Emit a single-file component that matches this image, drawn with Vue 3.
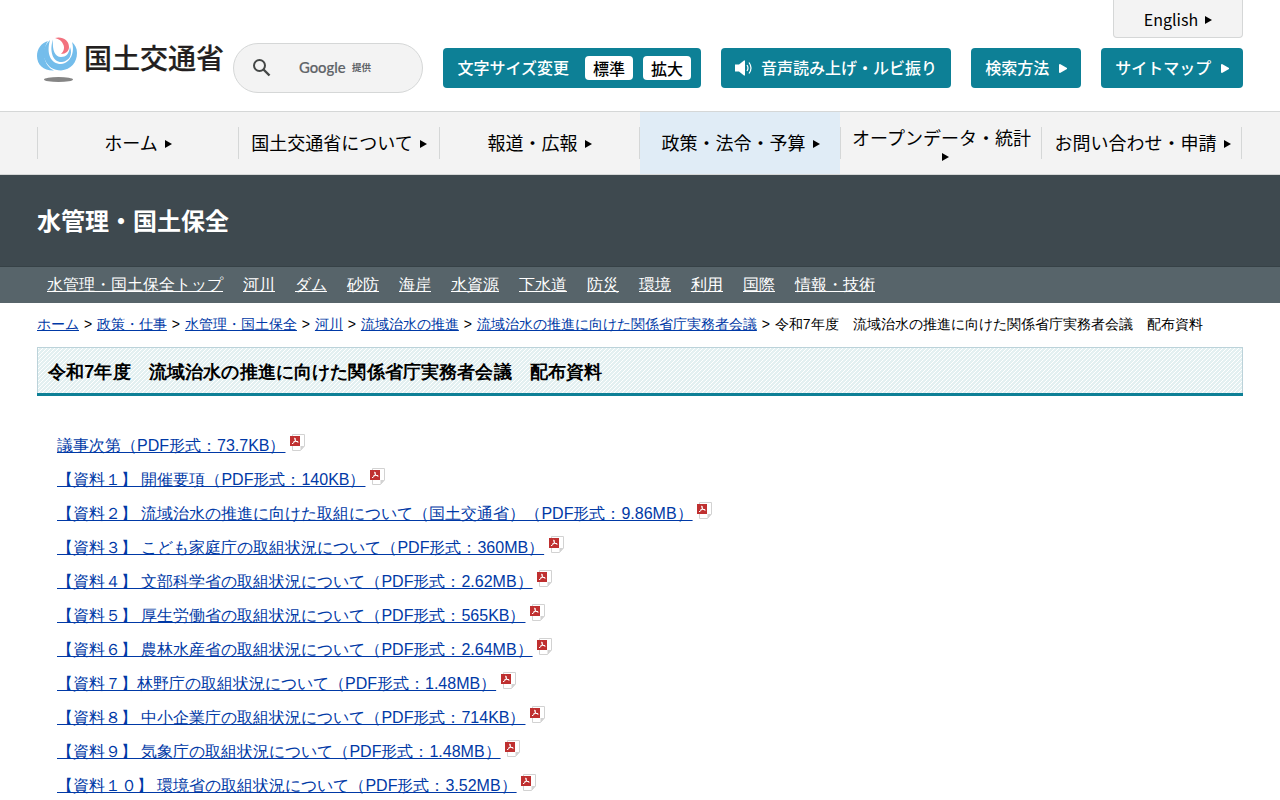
<script setup>
const nav = [
  { t: 'ホーム' },
  { t: '国土交通省について' },
  { t: '報道・広報' },
  { t: '政策・法令・予算', on: true },
  { t: 'オープンデータ・統計', wrap: true },
  { t: 'お問い合わせ・申請' },
]
const sub = ['水管理・国土保全トップ', '河川', 'ダム', '砂防', '海岸', '水資源', '下水道', '防災', '環境', '利用', '国際', '情報・技術']
const crumbs = ['ホーム', '政策・仕事', '水管理・国土保全', '河川', '流域治水の推進', '流域治水の推進に向けた関係省庁実務者会議']
const docs = [
  '議事次第（PDF形式：73.7KB）',
  '【資料１】 開催要項（PDF形式：140KB）',
  '【資料２】 流域治水の推進に向けた取組について（国土交通省）（PDF形式：9.86MB）',
  '【資料３】 こども家庭庁の取組状況について（PDF形式：360MB）',
  '【資料４】 文部科学省の取組状況について（PDF形式：2.62MB）',
  '【資料５】 厚生労働省の取組状況について（PDF形式：565KB）',
  '【資料６】 農林水産省の取組状況について（PDF形式：2.64MB）',
  '【資料７】林野庁の取組状況について（PDF形式：1.48MB）',
  '【資料８】 中小企業庁の取組状況について（PDF形式：714KB）',
  '【資料９】 気象庁の取組状況について（PDF形式：1.48MB）',
  '【資料１０】 環境省の取組状況について（PDF形式：3.52MB）',
]
</script>

<template>
  <div class="page">
    <header class="head">
      <a class="logo">
        <svg class="mark" width="42" height="46" viewBox="0 0 42 46">
          <path d="M11 4C4 6 0 12 0 19c0 9 7 15 17 14.500C7 29 4 15 11 4z" fill="#74bdeb" />
          <path d="M13 3C7 9 4.500 16 8 23c3 7 9 10.500 16 10.500 10-1 16-8 16-17.500 0-5-2-8-5-11 3 10-1 21-11 22-10 0-15-10-11-24z" fill="#74bdeb" />
          <path d="M16 2.500c-4 12 0 23 9 22.500 7-1 11-7 8-15-1 7-4 10-9 10-6 0-9-7-8-17.500z" fill="#74bdeb" />
          <path d="M18 1c7-2 14 2 14 9 0 4-3 7-8 7 3-3 4-7 2-10-1-3-4-5-8-6z" fill="#f2727f" />
          <ellipse cx="21.500" cy="42.500" rx="14.500" ry="2.500" fill="#858585" />
        </svg>
        <span class="name">国土交通省</span>
      </a>
      <div class="search">
        <svg width="20" height="20" viewBox="0 0 20 20" fill="none" stroke="#444746"><circle cx="7.500" cy="7.500" r="5.500" stroke-width="2" /><path d="M11.500 11.500l6 6" stroke-width="2.400" /></svg>
        <span class="google">Google</span><span class="by">提供</span>
      </div>
      <div class="tools">
        <div class="btn size"><span>文字サイズ変更</span><b>標準</b><b>拡大</b></div>
        <div class="btn voice">
          <svg width="18" height="16" viewBox="0 0 18 16"><path d="M0 4.500h4l5-4h1v15H9l-5-4H0z" fill="#fff" /><path d="M12 5q2 3 0 6M14 2.500q4 5.500 0 11" fill="none" stroke="#fff" stroke-width="1.200" /></svg>
          <span>音声読み上げ・ルビ振り</span>
        </div>
        <div class="btn"><span>検索方法</span><svg class="tri" width="8" height="9" viewBox="0 0 8 9"><path d="M0 .5L1 0l7 4-0 1-7 4-1-.5z" fill="#fff" /></svg></div>
        <div class="btn"><span>サイトマップ</span><svg class="tri" width="8" height="9" viewBox="0 0 8 9"><path d="M0 .5L1 0l7 4-0 1-7 4-1-.5z" fill="#fff" /></svg></div>
      </div>
      <a class="eng"><span>English</span><i class="arrow"></i></a>
    </header>

    <nav class="gnav">
      <ul>
        <li v-for="n in nav" :key="n.t" :class="{ on: n.on, wrap: n.wrap }">
          <span>{{ n.t }}</span><i class="arrow"></i>
        </li>
      </ul>
    </nav>

    <div class="band">水管理・国土保全</div>
    <nav class="sub"><a v-for="s in sub" :key="s">{{ s }}</a></nav>

    <main>
      <p class="crumbs"><template v-for="c in crumbs" :key="c"><a>{{ c }}</a><span class="gt">&gt;</span></template><span>令和7年度　流域治水の推進に向けた関係省庁実務者会議　配布資料</span></p>
      <h1>令和7年度　流域治水の推進に向けた関係省庁実務者会議　配布資料</h1>
      <ul class="docs">
        <li v-for="d in docs" :key="d">
          <a>{{ d }}</a>
          <svg width="15" height="17" viewBox="0 0 15 17">
            <path d="M2.500 .5h12v11.500l-4 4.500h-8z" fill="#fff" stroke="#d2d2d2" />
            <path d="M10.500 16.500V12h4z" fill="#d2d2d2" />
            <path d="M0 2h10v10H0z" fill="#bf3030" />
            <path d="M4.700 3.800c1 2 1 4-2.700 6M4.800 4c0 2.500 1.500 4 3.700 4.200M3.200 8q2.500-1 4.800-.4" fill="none" stroke="#fff" stroke-width="1" />
          </svg>
        </li>
      </ul>
    </main>
  </div>
</template>

<style>
html, body { margin: 0; overflow: hidden; }
</style>
<style scoped>
.page { width: 1280px; height: 800px; overflow: hidden; background: #fff; color: #000; font: 16px/24px "Liberation Sans", sans-serif; }
ul { list-style: none; margin: 0; padding: 0; }
.head { position: relative; box-sizing: border-box; height: 112px; padding: 0 37px; border-bottom: 1px solid #d5d7d7; display: flex; align-items: flex-start; font-family: "Noto Sans CJK JP", sans-serif; }
.logo { display: flex; width: 196px; padding-top: 37px; flex: none; }
.mark { flex: none; margin-right: 5px; }
.name { font-size: 28px; line-height: 40px; font-weight: 500; color: #231f20; white-space: nowrap; -webkit-text-stroke: .2px #231f20; }
.search { box-sizing: border-box; flex: none; width: 190px; height: 50px; margin-top: 43px; border: 1px solid #d5d7d7; border-radius: 25px; background: #f3f3f3; display: flex; align-items: center; padding-left: 18px; color: #5f6368; }
.google { margin-left: 27px; font: 500 14.800px/20px Lato, sans-serif; width: 53px; -webkit-text-stroke: .2px #5f6368; padding-bottom: 3px; }
.by { font-size: 9.500px; line-height: 20px; font-weight: 700; padding-bottom: 2px; }
.tools { display: flex; gap: 20px; margin: 48px 0 0 20px; }
.btn { box-sizing: border-box; height: 40px; padding: 0 14px; border-radius: 4px; background: #0d8096; color: #fff; font-weight: 500; display: flex; align-items: center; white-space: nowrap; }
.btn span { padding-bottom: 2px; margin: 0 -.6px 0 .6px; }
.size { padding-right: 10px; }
.size span { margin-right: 5.400px; }
.size b { box-sizing: border-box; background: #fff; color: #000; border-radius: 4px; width: 48px; height: 24px; line-height: 25px; padding-left: 8.600px; margin-left: 10px; font-weight: 500; }
.voice svg { margin-right: 8px; }
.tri { margin: 1px 0 0 10px; }
.eng { position: absolute; top: 0; right: 37px; width: 130px; height: 38px; box-sizing: border-box; border: 1px solid #d5d7d7; border-top: 0; border-radius: 0 0 4px 4px; background: #f3f3f3; display: flex; align-items: center; justify-content: center; padding-top: 3px; }
.eng span { padding-bottom: 2px; }
.arrow { display: block; width: 0; height: 0; border: solid transparent; border-width: 4px 0 4px 7px; border-left-color: #000; margin-left: 7px; }
.gnav { box-sizing: border-box; height: 63px; background: #f3f3f3; border-bottom: 1px solid #d5d7d7; padding: 0 37px; font: 18px/26px "Noto Sans CJK JP", sans-serif; }
.gnav ul { display: grid; grid-template-columns: 201px 201px 200px 201px 201px 201px; width: 1205px; }
.gnav li { position: relative; display: flex; height: 62px; align-items: center; justify-content: center; white-space: nowrap; }
.gnav li::before, .gnav li:last-child::after { content: ""; position: absolute; left: 0; top: 15px; width: 1px; height: 32px; background: #d5d7d7; }
.gnav li:last-child::after { left: auto; right: 0; }
.gnav span { padding-bottom: 2px; margin-left: 1px; }
.gnav .arrow { margin-top: 2px; }
.gnav li.on { background: linear-gradient(#e0ecf6, #e0ecf6) 1px 0 no-repeat; }
.gnav li.on span, .gnav li:last-child span { margin-left: 2px; }
.gnav li.wrap { flex-direction: column; box-sizing: border-box; padding-bottom: 2px; }
.gnav li.wrap .arrow { margin: 1px 0 0 9px; }
.gnav li.wrap span { margin-left: 2px; }
.band { box-sizing: border-box; height: 92px; border-bottom: 1px solid #364146; background: #3e494f; color: #fff; padding: 27px 37px 0; font: 700 24px/36px "Noto Sans CJK JP", sans-serif; }
.sub { height: 36px; background: #57646a; padding-left: 47px; display: flex; gap: 20px; color: #fff; line-height: 36px; }
a { text-decoration: none; }
.sub a, .crumbs a, .docs a { text-decoration: underline; }
main { padding: 0 37px; }
.crumbs { margin: 0; padding-top: 11px; font-size: 14px; line-height: 21px; white-space: nowrap; }
.crumbs a, .docs a { color: #0039a6; }
.gt { margin: 0 4.900px; }
h1 { box-sizing: border-box; height: 46px; margin: 12px 0 0; padding-left: 10px; border: 1px solid #bcd3da; border-bottom: 0; box-shadow: 0 3px #0d8096; background: linear-gradient(135deg, #fff 18.75%, #e3f0f1 18.75% 56.25%, #fff 56.25% 68.75%, #e3f0f1 68.75%) 0 0 / 4px 4px; font-size: 18px; letter-spacing: .14px; line-height: 48px; }
.docs { padding: 36px 20px 0; }
.docs li { height: 34px; display: flex; align-items: flex-start; line-height: 34px; white-space: nowrap; }
.docs svg { margin: 5px 0 0 4.450px; }
</style>
